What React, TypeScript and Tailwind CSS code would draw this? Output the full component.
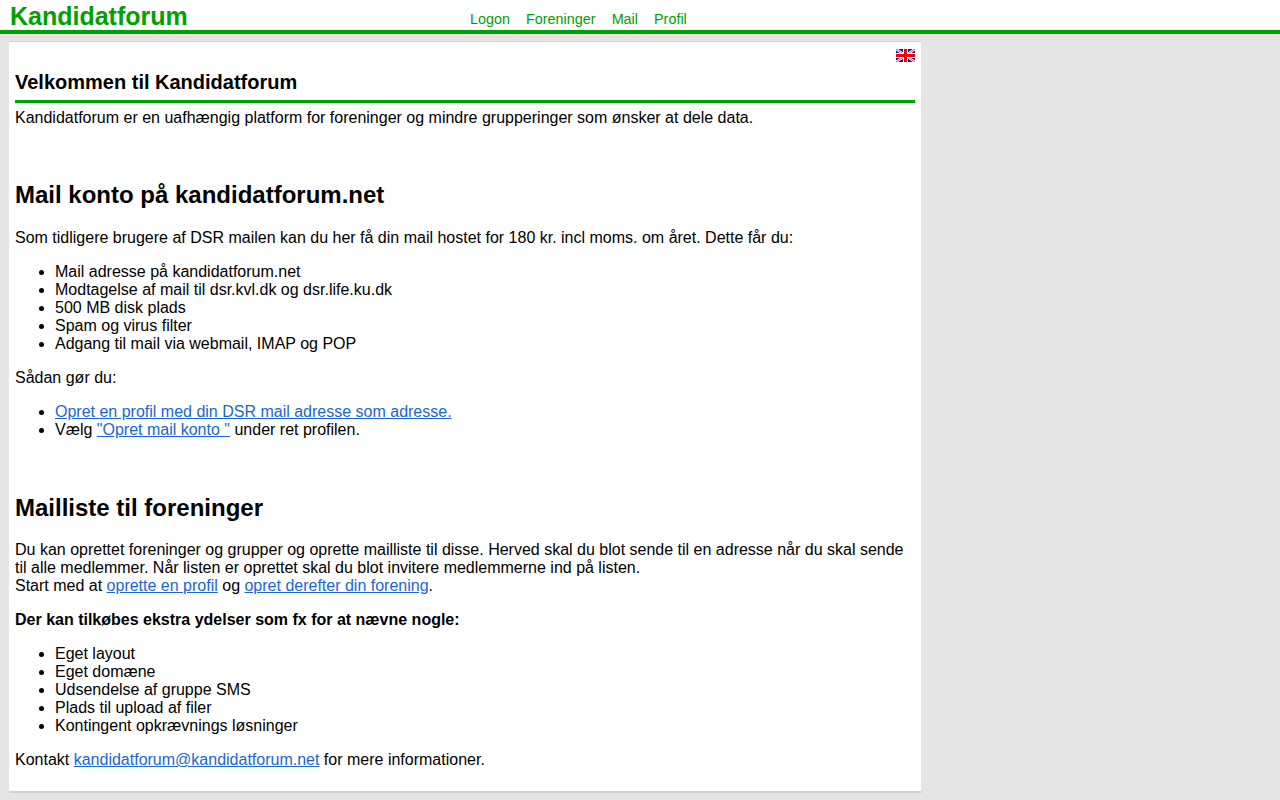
import React from 'react';

const linkClass = 'text-[#1a66d6] underline';

function Flag() {
  return (
    <svg width="19" height="13" viewBox="0 0 19 13">
      <rect width="19" height="13" fill="#14148c" />
      <path d="M0 0L19 13M19 0L0 13" stroke="#ffffff" strokeWidth="2.4" />
      <path d="M0 0L9.5 6.5M19 0L9.5 6.5M0 13L9.5 6.5M19 13L9.5 6.5" stroke="#e8202a" strokeWidth="0.8" />
      <g shapeRendering="crispEdges">
        <rect x="7" width="5" height="13" fill="#ffffff" />
        <rect y="4" width="19" height="5" fill="#ffffff" />
        <rect x="8" width="3" height="13" fill="#f00000" />
        <rect y="5" width="19" height="3" fill="#f00000" />
      </g>
    </svg>
  );
}

function Bullets({ items }: { items: React.ReactNode[] }) {
  return (
    <ul className="my-4 list-disc pl-10">
      {items.map((item, i) => (
        <li key={i}>{item}</li>
      ))}
    </ul>
  );
}

export default function App() {
  return (
    <div className="min-h-screen bg-[#e5e5e5] font-['Liberation_Sans',Arial,sans-serif] text-base leading-[18px] text-black">
      <header className="flex h-[34px] border-b-4 border-[#00a000] bg-white">
        <div className="w-[470px] pl-[10px] text-[25px] leading-[33px] font-bold text-[#00a000]">Kandidatforum</div>
        <nav className="flex gap-4 pt-[10px] text-[14.4px] text-[#00a000]">
          <a href="#">Logon</a>
          <a href="#">Foreninger</a>
          <a href="#">Mail</a>
          <a href="#">Profil</a>
        </nav>
      </header>

      <main className="mt-[7px] ml-[9px] w-[912px] border-t border-b-2 border-[#d0d0d0] bg-white px-[6px] pb-[22px]">
        <div className="flex justify-end pt-[7px]">
          <Flag />
        </div>
        <h2 className="mt-[9px] border-b-[3px] border-[#00a000] pb-[6px] text-[20px] leading-[23px] font-bold">
          Velkommen til Kandidatforum
        </h2>
        <p className="mt-[6px]">Kandidatforum er en uafhængig platform for foreninger og mindre grupperinger som ønsker at dele data.</p>

        <h1 className="mt-[54px] text-2xl leading-[28px] font-bold">Mail konto på kandidatforum.net</h1>
        <p className="mt-[20px]">Som tidligere brugere af DSR mailen kan du her få din mail hostet for 180 kr. incl moms. om året. Dette får du:</p>
        <Bullets
          items={[
            'Mail adresse på kandidatforum.net',
            'Modtagelse af mail til dsr.kvl.dk og dsr.life.ku.dk',
            '500 MB disk plads',
            'Spam og virus filter',
            'Adgang til mail via webmail, IMAP og POP',
          ]}
        />
        <p>Sådan gør du:</p>
        <Bullets
          items={[
            <a href="#" className={linkClass}>Opret en profil med din DSR mail adresse som adresse.</a>,
            <>Vælg <a href="#" className={linkClass}>"Opret mail konto "</a> under ret profilen.</>,
          ]}
        />

        <h1 className="mt-[55px] text-2xl leading-[28px] font-bold">Mailliste til foreninger</h1>
        <p className="mt-[19px]">
          Du kan oprettet foreninger og grupper og oprette mailliste til disse. Herved skal du blot sende til en adresse når du skal sende til alle medlemmer. Når listen er oprettet skal du blot invitere medlemmerne ind på listen.
          <br />
          Start med at <a href="#" className={linkClass}>oprette en profil</a> og <a href="#" className={linkClass}>opret derefter din forening</a>.
        </p>
        <p className="mt-4 font-bold">Der kan tilkøbes ekstra ydelser som fx for at nævne nogle:</p>
        <Bullets
          items={[
            'Eget layout',
            'Eget domæne',
            'Udsendelse af gruppe SMS',
            'Plads til upload af filer',
            'Kontingent opkrævnings løsninger',
          ]}
        />
        <p>
          Kontakt <a href="#" className={linkClass}>kandidatforum@kandidatforum.net</a> for mere informationer.
        </p>
      </main>
    </div>
  );
}
